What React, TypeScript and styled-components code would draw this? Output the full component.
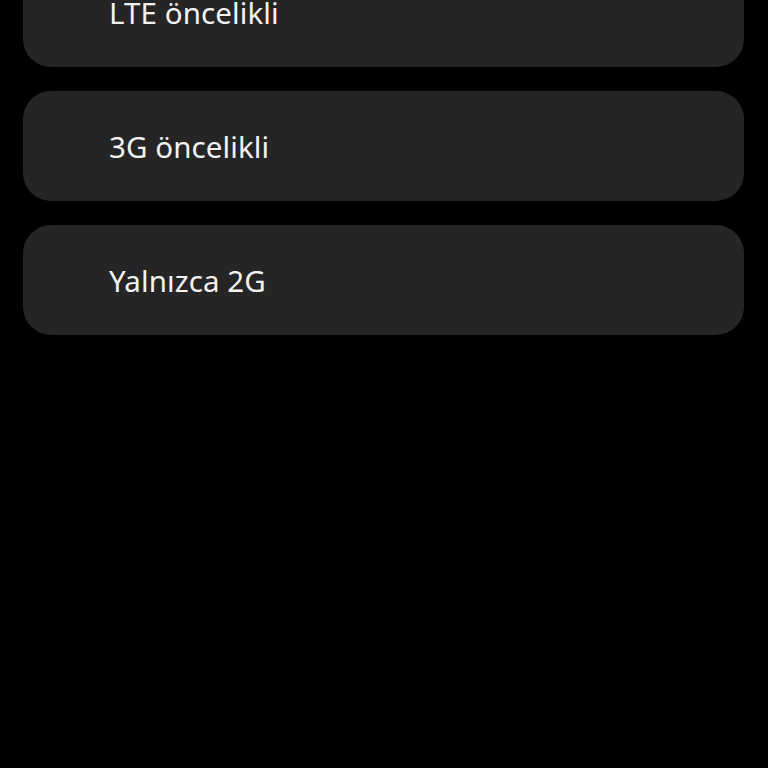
import React from 'react';
import styled, { createGlobalStyle } from 'styled-components';

const GlobalStyle = createGlobalStyle`
    html, body {
        margin: 0;
        padding: 0;
        background: #000;
        overflow: hidden;
    }
`;

const Screen = styled.div`
    width: 768px;
    height: 768px;
    background: #000;
    overflow: hidden;
`;

const OptionList = styled.div`
    display: flex;
    flex-direction: column;
    gap: 24px;
    padding: 0 24px 0 23px;
    margin-top: -43px;
`;

const OptionCard = styled.div`
    height: 110px;
    display: flex;
    align-items: center;
    padding-left: 86px;
    background: #252525;
    border-radius: 28px;
    color: #f2f2f2;
    font-family: "Noto Sans", Inter, sans-serif;
    font-size: 29.5px;
    letter-spacing: 0.1px;
`;

const options = ['LTE öncelikli', '3G öncelikli', 'Yalnızca 2G'];

export default function App() {
    return (
        <Screen>
            <GlobalStyle />
            <OptionList>
                {options.map((label) => (
                    <OptionCard key={label}>{label}</OptionCard>
                ))}
            </OptionList>
        </Screen>
    );
}
